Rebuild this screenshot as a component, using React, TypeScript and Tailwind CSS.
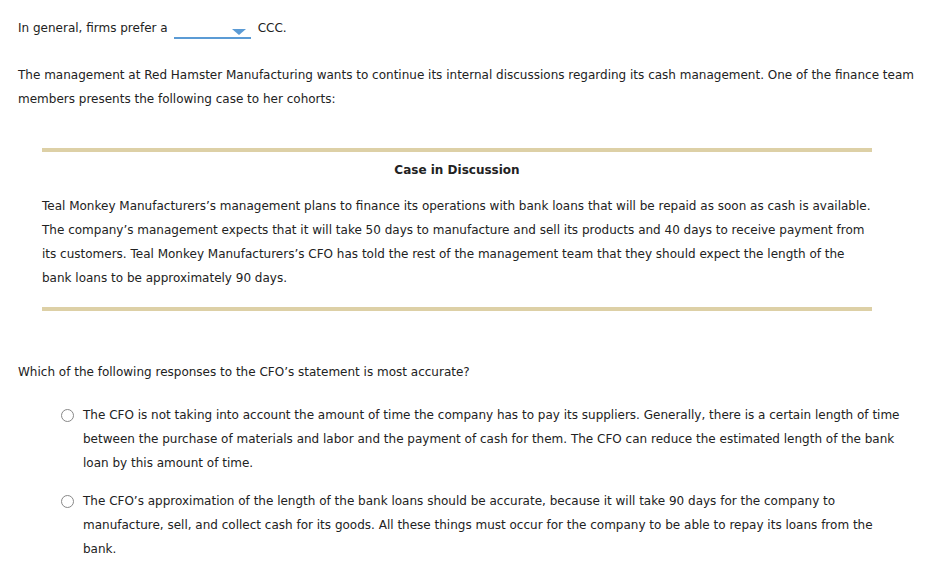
export default function App() {
  const font = { fontFamily: '"DejaVu Sans", Verdana, sans-serif' };
  return (
    <div className="bg-white min-h-[571px] w-[933px] text-[12px] leading-[24px] text-[#222]" style={font}>
      <div className="pl-[18px] pr-[14px] pt-[16px]">
        <div className="flex items-center h-[24px]">
          <span>In general, firms prefer a</span>
          <span className="relative ml-[6px] inline-block w-[77px] h-[20px] border-b-2 border-[#5b9bd5] top-[1px]">
            <svg className="absolute right-[5px] top-[10px]" width="14" height="6" viewBox="0 0 14 6">
              <polygon points="0,0 14,0 7,6" fill="#5b9bd5" />
            </svg>
          </span>
          <span className="ml-[7px]">CCC.</span>
        </div>
        <p className="mt-[23px]">
          The management at Red Hamster Manufacturing wants to continue its internal discussions regarding its cash management. One of the finance team members presents the following case to her cohorts:
        </p>
      </div>
      <div className="mx-[42px] w-[830px] mt-[37px]">
        <div className="h-[4px] bg-[#ddd0a6]" />
        <div className="text-center font-bold mt-[6px]">Case in Discussion</div>
        <p className="mt-[12px]">
          Teal Monkey Manufacturers’s management plans to finance its operations with bank loans that will be repaid as soon as cash is available. The company’s management expects that it will take 50 days to manufacture and sell its products and 40 days to receive payment from its customers. Teal Monkey Manufacturers’s CFO has told the rest of the management team that they should expect the length of the bank loans to be approximately 90 days.
        </p>
        <div className="h-[4px] bg-[#ddd0a6] mt-[17px]" />
      </div>
      <div className="pl-[18px] pr-[14px] mt-[49px]">
        <p>Which of the following responses to the CFO’s statement is most accurate?</p>
        <div className="mt-[19px] pl-[43px] flex flex-col gap-[14px]">
          {[
            "The CFO is not taking into account the amount of time the company has to pay its suppliers. Generally, there is a certain length of time between the purchase of materials and labor and the payment of cash for them. The CFO can reduce the estimated length of the bank loan by this amount of time.",
            "The CFO’s approximation of the length of the bank loans should be accurate, because it will take 90 days for the company to manufacture, sell, and collect cash for its goods. All these things must occur for the company to be able to repay its loans from the bank.",
          ].map((t, i) => (
            <div key={i} className="flex items-start">
              <span className="mt-[6px] w-[13px] h-[13px] rounded-full border border-[#888] bg-white shrink-0" />
              <p className="ml-[9px] w-[822px]">{t}</p>
            </div>
          ))}
        </div>
      </div>
    </div>
  );
}
